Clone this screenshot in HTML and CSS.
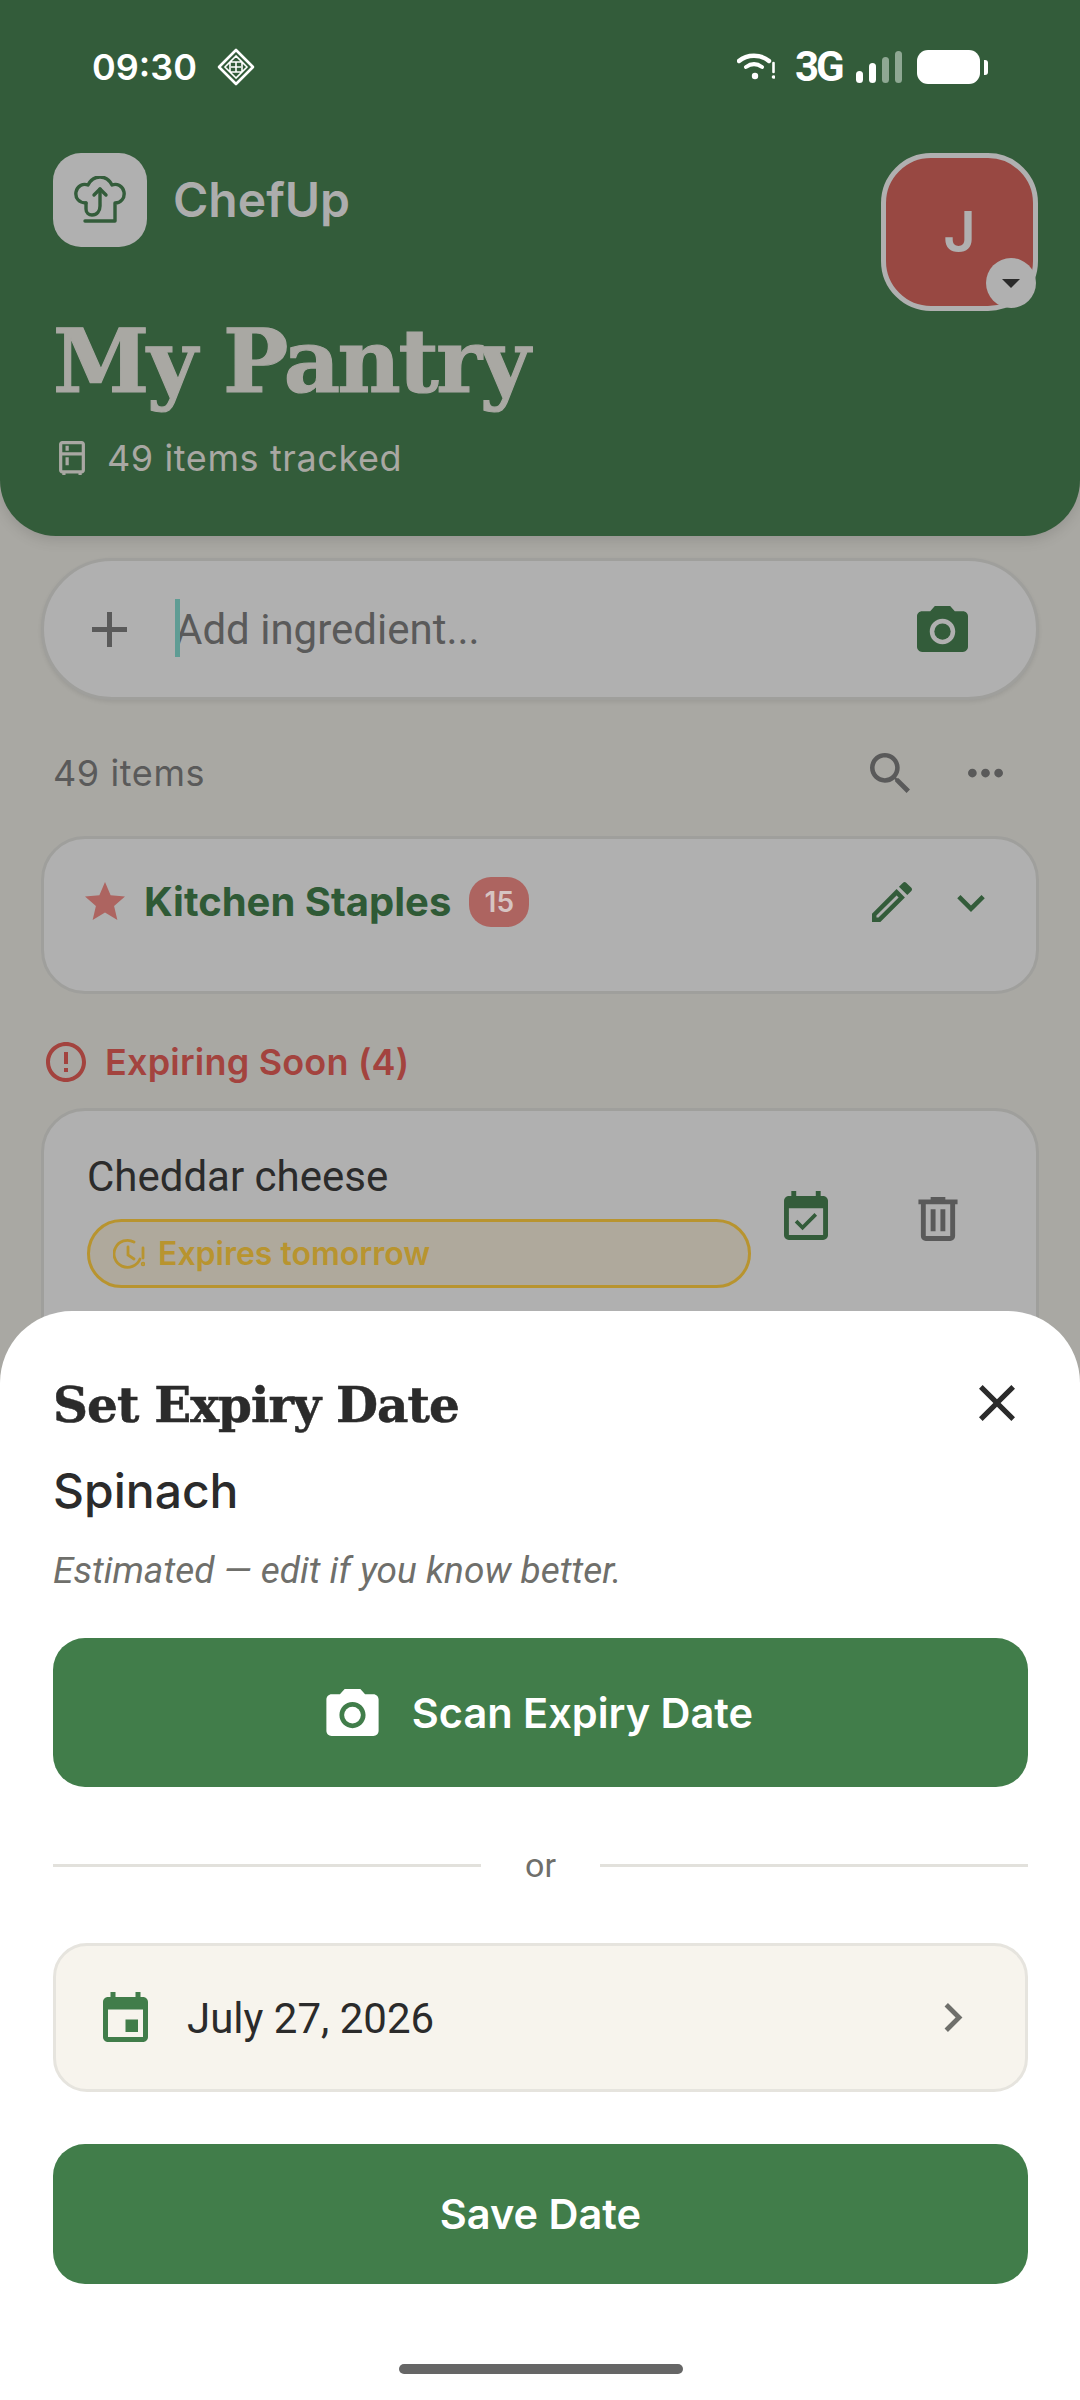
FILE: index.html
```html
<!DOCTYPE html>
<html lang="en">
<head>
<meta charset="utf-8">
<title>ChefUp - My Pantry</title>
<link rel="stylesheet" href="styles.css">
</head>
<body>
<div class="app">
  <header class="hero">
    <div class="status">
      <div class="status-left">
        <span class="clock">09:30</span>
        <svg class="st-diamond" viewBox="0 0 38 38" fill="none" stroke="#fff"><path d="M19 2 36 19 19 36 2 19Z" stroke-width="2.6" stroke-linejoin="round"/><path d="M19 8 13 14h12ZM19 30l-6-6h12ZM8 19l5-5v10ZM30 19l-5-5v10ZM19 14v10M14 19h10" stroke-width="1.6"/></svg>
      </div>
      <div class="status-right">
        <svg class="st-wifi" viewBox="0 0 38 28" fill="none" stroke="#fff" stroke-linecap="round"><path d="M2 8C10 1 24 1 32 8" stroke-width="4.4"/><path d="M9 14c5-3.6 11-3.6 16 0" stroke-width="4"/><circle cx="18" cy="23" r="3.2" fill="#fff" stroke="none"/><path d="M36.500 10v9" stroke-width="2.600"/><circle cx="36.500" cy="24" r="1.800" fill="#fff" stroke="none"/></svg>
        <span class="st-net">3G</span>
        <div class="st-bars"><i class="b1"></i><i class="b2"></i><i class="b3"></i><i class="b4"></i></div>
        <div class="st-batt"><i class="st-batt-body"></i><i class="st-batt-nub"></i></div>
      </div>
    </div>
    <div class="brand-row">
      <div class="brand">
        <div class="logo-tile">
          <svg class="logo-hat" viewBox="0 0 52 48" fill="none" stroke="#335c3a" stroke-width="3.400" stroke-linecap="round" stroke-linejoin="round"><path d="M12 27C5 27 1 22 2 16 3 10 9 7 14 9 17 3 22 1 26 1 31 1 35 3 38 9 43 7 49 10 50 16 51 22 47 27 41 27V45H11"/><path d="M12 27V33C12 37 15 39 18 39 23 39 26 35 26 30V13"/><path d="M20 19 26 13 32 19"/></svg>
        </div>
        <span class="brand-name">ChefUp</span>
      </div>
      <button class="avatar">
        <span class="avatar-letter">J</span>
        <span class="avatar-caret"><i></i></span>
      </button>
    </div>
    <h1 class="hero-title">My Pantry</h1>
    <div class="hero-sub">
      <svg class="ic-fridge" viewBox="4 2 16 21"><path d="M18 2.010 6 2c-1.100 0-2 .890-2 2v16c0 1.100.900 2 2 2v1h2v-1h8v1h2v-1c1.100 0 2-.900 2-2V4c0-1.110-.900-1.990-2-1.990zM18 20H6v-9.020h12V20zm0-11H6V4h12v5zM8 5h2v3H8zm0 7h2v5H8z"/></svg>
      <span>49 items tracked</span>
    </div>
  </header>

  <main class="content">
    <div class="add-bar">
      <svg class="ic-plus" viewBox="5 5 14 14"><path d="M19 13h-6v6h-2v-6H5v-2h6V5h2v6h6v2z"/></svg>
      <div class="add-field"><i class="caret"></i><span>Add ingredient...</span></div>
      <svg class="ic-cam" viewBox="2 2 20 18"><path fill-rule="evenodd" d="M9 2 7.170 4H4c-1.100 0-2 .900-2 2v12c0 1.100.900 2 2 2h16c1.100 0 2-.900 2-2V6c0-1.100-.900-2-2-2h-3.170L15 2H9zm3 15c-2.760 0-5-2.240-5-5s2.240-5 5-5 5 2.240 5 5-2.240 5-5 5z"/><circle cx="12" cy="12" r="3.200"/></svg>
    </div>

    <div class="list-bar">
      <span class="list-count">49 items</span>
      <div class="list-tools">
        <svg class="ic-search" viewBox="3 3 17.500 17.500"><path d="M15.500 14h-.790l-.280-.270C15.410 12.590 16 11.110 16 9.500 16 5.910 13.090 3 9.500 3S3 5.910 3 9.500 5.910 16 9.500 16c1.610 0 3.090-.590 4.230-1.570l.270.280v.790l5 4.990L20.490 19l-4.990-5zm-6 0C7.010 14 5 11.990 5 9.500S7.010 5 9.500 5 14 7.010 14 9.500 11.990 14 9.500 14z"/></svg>
        <svg class="ic-more" viewBox="4 10 16 4"><path d="M6 10c-1.100 0-2 .900-2 2s.900 2 2 2 2-.900 2-2-.900-2-2-2zm12 0c-1.100 0-2 .900-2 2s.900 2 2 2 2-.900 2-2-.900-2-2-2zm-6 0c-1.100 0-2 .900-2 2s.900 2 2 2 2-.900 2-2-.900-2-2-2z"/></svg>
      </div>
    </div>

    <section class="staples">
      <svg class="ic-star" viewBox="2 2 20 19"><path d="M12 17.270 18.180 21l-1.640-7.030L22 9.240l-7.190-.610L12 2 9.190 8.630 2 9.240l5.460 4.730L5.820 21z"/></svg>
      <span class="staples-name">Kitchen Staples</span>
      <span class="staples-count">15</span>
      <span class="spacer"></span>
      <svg class="ic-edit" viewBox="3 3 18 18"><path d="M3 17.250V21h3.750L17.810 9.940l-3.750-3.750L3 17.250zM5.920 19H5v-.920l9.060-9.060.920.920L5.920 19zM20.710 5.630l-2.340-2.340c-.200-.200-.450-.290-.710-.290s-.510.100-.700.290l-1.830 1.830 3.750 3.750 1.830-1.830c.390-.390.390-1.020 0-1.410z"/></svg>
      <svg class="ic-expand" viewBox="6 8.590 12 7.410"><path d="M16.590 8.590 12 13.170 7.410 8.590 6 10l6 6 6-6z"/></svg>
    </section>

    <h2 class="section-head">
      <svg class="ic-alert" viewBox="2 2 20 20"><path d="M11 15h2v2h-2zm0-8h2v6h-2zm.990-5C6.470 2 2 6.480 2 12s4.470 10 9.990 10C17.520 22 22 17.520 22 12S17.520 2 11.990 2zM12 20c-4.420 0-8-3.580-8-8s3.580-8 8-8 8 3.580 8 8-3.580 8-8 8z"/></svg>
      <span>Expiring Soon (4)</span>
    </h2>

    <article class="item">
      <div class="item-main">
        <div class="item-name">Cheddar cheese</div>
        <div class="chip">
          <svg class="ic-clock" viewBox="0 0 32 32" fill="none" stroke="#b8942f" stroke-width="2.800" stroke-linecap="round"><path d="M27 21A13.500 13.500 0 1 1 21 4"/><path d="M15 9v8l6 4"/><path d="M30 10v10"/><circle cx="30" cy="26" r=".8"/></svg>
          <span>Expires tomorrow</span>
        </div>
      </div>
      <svg class="ic-event-ok" viewBox="3 1 18 20"><path d="M16.530 11.060 15.470 10l-4.880 4.880-2.120-2.120-1.060 1.060L10.590 17l5.940-5.940zM19 3h-1V1h-2v2H8V1H6v2H5c-1.110 0-1.990.900-1.990 2L3 19c0 1.100.890 2 2 2h14c1.100 0 2-.900 2-2V5c0-1.100-.900-2-2-2zm0 16H5V8h14v11z"/></svg>
      <svg class="ic-trash" viewBox="4 3 16 18"><path fill-rule="evenodd" d="M9 3v1H4v2h1v13a2 2 0 0 0 2 2h10a2 2 0 0 0 2-2V6h1V4h-5V3H9zM7 6h10v13H7V6zm2 2v9h2V8H9zm4 0v9h2V8h-2z"/></svg>
    </article>
  </main>

  <aside class="sheet">
    <div class="sheet-head">
      <h2 class="sheet-title">Set Expiry Date</h2>
      <svg class="ic-close" viewBox="5 5 14 14"><path d="M19 6.410 17.590 5 12 10.590 6.410 5 5 6.410 10.590 12 5 17.590 6.410 19 12 13.410 17.590 19 19 17.590 13.410 12z"/></svg>
    </div>
    <div class="sheet-item">Spinach</div>
    <p class="sheet-note">Estimated — edit if you know better.</p>
    <button class="btn btn-scan">
      <svg class="ic-cam-w" viewBox="2 2 20 18"><path fill-rule="evenodd" d="M9 2 7.170 4H4c-1.100 0-2 .900-2 2v12c0 1.100.900 2 2 2h16c1.100 0 2-.900 2-2V6c0-1.100-.900-2-2-2h-3.170L15 2H9zm3 15c-2.760 0-5-2.240-5-5s2.240-5 5-5 5 2.240 5 5-2.240 5-5 5z"/><circle cx="12" cy="12" r="3.200"/></svg>
      <span>Scan Expiry Date</span>
    </button>
    <div class="or-row"><i></i><span>or</span><i></i></div>
    <div class="date-row">
      <svg class="ic-event" viewBox="3 1 18 20"><path d="M17 12h-5v5h5v-5zM16 1v2H8V1H6v2H5c-1.110 0-1.990.900-1.990 2L3 19c0 1.100.890 2 2 2h14c1.100 0 2-.900 2-2V5c0-1.100-.900-2-2-2h-1V1h-2zm3 18H5V8h14v11z"/></svg>
      <span class="date-text">July 27, 2026</span>
      <svg class="ic-chev" viewBox="8.590 6 7.410 12"><path d="M10 6 8.590 7.410 13.170 12l-4.580 4.590L10 18l6-6z"/></svg>
    </div>
    <button class="btn btn-save"><span>Save Date</span></button>
    <div class="home-wrap"><i class="home-bar"></i></div>
  </aside>
</div>
</body>
</html>
```

FILE: styles.css
```css
* { box-sizing: border-box; }
html, body { margin: 0; padding: 0; }
body { background: #a9a8a3; font-family: "Inter", "Noto Sans", sans-serif; }
svg { display: block; flex: none; }
h1, h2, p { margin: 0; }
button { border: 0; padding: 0; font: inherit; }

.app { position: relative; width: 1080px; height: 2400px; overflow: hidden; background: #a9a8a3; }

/* hero */
.hero { height: 536px; background: #335c3a; border-radius: 0 0 56px 56px; padding: 48px 42px 0 53px; box-shadow: 0 4px 14px rgba(0,0,0,.12); }
.status { display: flex; justify-content: space-between; align-items: center; height: 38px; padding: 0 50px 0 39px; color: #fff; }
.status-left { display: flex; align-items: center; gap: 20px; }
.clock { font: 600 36px/38px "Inter", sans-serif; }
.st-diamond { width: 38px; height: 38px; }
.status-right { display: flex; align-items: center; }
.st-wifi { width: 38px; height: 28px; }
.st-net { font: 700 42px/38px "Roboto", sans-serif; letter-spacing: -3px; margin-left: 20px; width: 46px; }
.st-bars { display: flex; align-items: flex-end; gap: 6px; margin-left: 15px; height: 32px; }
.st-bars i { width: 7px; border-radius: 4px; background: #fff; }
.st-bars .b1 { height: 12px; }
.st-bars .b2 { height: 20px; }
.st-bars .b3 { height: 26px; background: #8fa893; }
.st-bars .b4 { height: 32px; background: #8fa893; }
.st-batt { display: flex; align-items: center; gap: 4px; margin-left: 15px; }
.st-batt-body { width: 63px; height: 34px; border-radius: 11px; background: #fff; }
.st-batt-nub { width: 4px; height: 15px; border-radius: 0 3px 3px 0; background: #fff; }

.brand-row { display: flex; justify-content: space-between; align-items: flex-start; margin-top: 67px; }
.brand { display: flex; align-items: center; gap: 26px; height: 94px; }
.logo-tile { width: 94px; height: 94px; border-radius: 28px; background: #b0b0b0; display: flex; align-items: center; justify-content: center; }
.logo-hat { width: 52px; height: 48px; }
.brand-name { font: 600 48px/56px "Inter", sans-serif; color: #adadad; }
.avatar { position: relative; width: 157px; height: 158px; border: 5px solid #b0b0b0; border-radius: 50px; background: #984842; display: flex; align-items: center; justify-content: center; }
.avatar-letter { font: 600 56px/60px "Inter", sans-serif; color: #b0b0b0; }
.avatar-caret { position: absolute; right: -3px; bottom: -2px; width: 50px; height: 50px; border-radius: 50%; background: #b0b0b0; display: flex; align-items: center; justify-content: center; }
.avatar-caret i { width: 0; height: 0; border-left: 9px solid transparent; border-right: 9px solid transparent; border-top: 9px solid #2a2a2a; }

.hero-title { font: 700 87px/96px "DejaVu Serif", serif; color: #a9a8a3; margin-top: 3px; letter-spacing: -2.4px; -webkit-text-stroke: 1.2px #a9a8a3; }
.hero-sub { display: flex; align-items: center; gap: 22px; margin-top: 26px; padding-left: 6px; font: 400 36px/44px "Inter", sans-serif; letter-spacing: .6px; color: #a9a8a3; }
.ic-fridge { width: 26px; height: 34px; fill: #a9a8a3; }

/* content */
.content { padding: 22px 41px 0; }
.add-bar { display: flex; align-items: center; height: 142px; border: 3px solid #9f9f9c; border-radius: 71px; background: #b0b0b0; padding: 0 68px 0 48px; box-shadow: 0 2px 4px rgba(0,0,0,.08); }
.ic-plus { width: 35px; height: 35px; fill: #5a5a5a; }
.add-field { display: flex; align-items: center; flex: 1; margin-left: 48px; padding-top: 2px; font: 400 42px/50px "Roboto", sans-serif; color: #5a5a5a; position: relative; }
.caret { position: absolute; left: 0; top: -4px; width: 5px; height: 58px; background: #5f9c94; }
.ic-cam { width: 51px; height: 46px; fill: #335c3a; }

.list-bar { display: flex; justify-content: space-between; align-items: center; height: 58px; margin-top: 44px; padding: 0 36px 0 12px; }
.list-count { font: 400 36px/44px "Inter", sans-serif; letter-spacing: .6px; color: #5a5a5a; }
.list-tools { display: flex; align-items: center; gap: 58px; }
.ic-search { width: 40px; height: 40px; fill: #5a5a5a; }
.ic-more { width: 35px; height: 10px; fill: #5a5a5a; }

.staples { display: flex; align-items: flex-start; height: 158px; margin-top: 34px; border: 3px solid #9f9f9c; border-radius: 44px; background: #b0b0b0; padding: 38px 51px 0 41px; }
.ic-star { width: 40px; height: 38px; fill: #ad6460; margin-top: 5px; }
.staples-name { font: 700 40px/50px "Inter", sans-serif; color: #2f5a36; margin-left: 19px; }
.staples-count { width: 60px; height: 50px; border-radius: 22px; background: #ad6460; color: #d6c4c2; font: 600 28px/50px "Inter", sans-serif; text-align: center; margin-left: 18px; }
.spacer { flex: 1; }
.ic-edit { width: 40px; height: 40px; fill: #335c3a; margin-top: 5px; }
.ic-expand { width: 28px; height: 17px; fill: #335c3a; margin: 18px 0 0 45px; }

.section-head { display: flex; align-items: center; gap: 19px; margin-top: 46px; padding-left: 5px; font: 600 36px/44px "Inter", sans-serif; letter-spacing: .2px; color: #a3433e; }
.ic-alert { width: 40px; height: 40px; fill: #a3433e; }

.item { display: flex; align-items: flex-start; height: 300px; margin-top: 24px; border: 3px solid #9f9f9c; border-radius: 44px; background: #b0b0b0; padding: 42px 77px 0 43px; }
.item-main { width: 664px; }
.item-name { font: 400 42px/48px "Roboto", sans-serif; color: #2b2b2b; }
.chip { display: flex; align-items: center; gap: 13px; height: 69px; margin-top: 18px; border: 3px solid #b8942f; border-radius: 35px; background: #afa99c; padding-left: 23px; font: 600 32px/40px "Inter", sans-serif; color: #b8942f; }
.ic-clock { width: 32px; height: 32px; }
.ic-event-ok { width: 44px; height: 49px; fill: #335c3a; margin: 38px 0 0 33px; }
.ic-trash { width: 40px; height: 44px; fill: #5a5a5a; margin: 44px 0 0 90px; }

/* sheet */
.sheet { position: absolute; left: 0; right: 0; bottom: 0; height: 1089px; background: #fff; border-radius: 72px 72px 0 0; padding: 60px 52px 0 53px; }
.sheet-head { display: flex; justify-content: space-between; align-items: center; height: 64px; }
.sheet-title { font: 700 48.5px/64px "DejaVu Serif", serif; color: #2b2b2b; letter-spacing: -1px; margin-top: 3px; -webkit-text-stroke: .5px #2b2b2b; }
.ic-close { width: 38px; height: 36px; fill: #2b2b2b; margin-right: 12px; }
.sheet-item { font: 500 48px/58px "Inter", sans-serif; color: #2b2b2b; margin-top: 27px; }
.sheet-note { font: italic 400 37px/44px "Roboto", sans-serif; color: #6f6f6b; margin-top: 29px; }
.btn { display: flex; align-items: center; justify-content: center; width: 975px; background: #417d4a; color: #fff; border-radius: 32px; font: 600 41.5px/50px "Inter", sans-serif; }
.btn-scan { height: 149px; margin-top: 45px; gap: 33px; }
.ic-cam-w { width: 53px; height: 47px; fill: #fff; margin-left: -2px; }
.or-row { display: flex; align-items: center; justify-content: space-between; height: 40px; margin-top: 58px; font: 400 34px/40px "Roboto", sans-serif; color: #6f6f6b; }
.or-row i { width: 428px; height: 3px; background: #e2e1dc; }
.date-row { display: flex; align-items: center; height: 149px; margin-top: 58px; width: 975px; border: 3px solid #e6e4de; border-radius: 34px; background: #f7f4ed; padding: 0 62px 0 47px; }
.ic-event { width: 45px; height: 50px; fill: #417d4a; margin-top: -2px; }
.date-text { flex: 1; margin-left: 39px; padding-top: 3px; font: 400 42px/50px "Roboto", sans-serif; color: #2b2b2b; }
.ic-chev { width: 19px; height: 29px; fill: #6f6f6b; }
.btn-save { height: 140px; margin-top: 52px; }
.home-wrap { display: flex; justify-content: center; margin-top: 80px; }
.home-bar { width: 284px; height: 10px; border-radius: 5px; background: #666; }
```
